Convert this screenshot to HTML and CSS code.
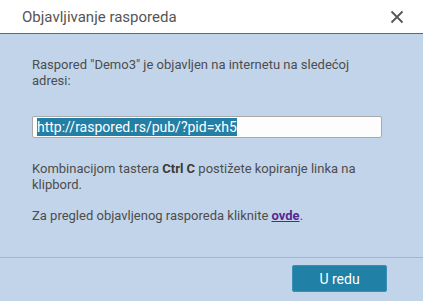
FILE: index.html
```html
<!DOCTYPE html>
<html>
<head>
<meta charset="utf-8">
<link rel="stylesheet" href="styles.css">
</head>
<body>
<div class="dialog">
  <div class="header">
    <span class="title">Objavljivanje rasporeda</span>
    <svg class="close" width="14" height="14" viewBox="0 0 14 14"><path d="M1.5 1.5 L12.5 12.5 M12.5 1.5 L1.5 12.5" stroke="#555" stroke-width="1.8" fill="none"/></svg>
  </div>
  <div class="content">
    <p class="p1">Raspored "Demo3" je objavljen na internetu na sledećoj adresi:</p>
    <div class="field"><span class="sel">http://raspored.rs/pub/?pid=xh5</span></div>
    <p class="p2">Kombinacijom tastera <b>Ctrl C</b> postižete kopiranje linka na klipbord.</p>
    <p class="p3">Za pregled objavljenog rasporeda kliknite <a href="#" class="link">ovde</a>.</p>
  </div>
  <div class="footer">
    <button class="ok">U redu</button>
  </div>
</div>
</body>
</html>
```

FILE: styles.css
```css
html, body {
  margin: 0;
  padding: 0;
}
body {
  font-family: Roboto, "Liberation Sans", sans-serif;
  background: #c2d4ea;
}
.dialog {
  width: 423px;
  height: 301px;
  display: flex;
  flex-direction: column;
  background: #c2d4ea;
}
.header {
  height: 33px;
  background: #ffffff;
  border-bottom: 1px solid #2b7a9b;
  display: flex;
  align-items: center;
  justify-content: space-between;
  padding: 0 19px 0 22px;
  flex: none;
}
.title {
  font-size: 15px;
  color: #555555;
}
.close {
  display: block;
  margin-top: 1px;
}
.content {
  flex: 1;
  padding: 23px 41px 0 32px;
  color: #4d4d4d;
  font-size: 13px;
  line-height: 16px;
}
.content p {
  margin: 0;
}
.p1 {
  margin-bottom: 27px !important;
}
.field {
  height: 20px;
  border: 1px solid #a9a9a9;
  border-radius: 2px;
  background: #fdfdfd;
  padding: 0 4px;
  font-size: 14px;
  line-height: 20px;
  color: #fff;
  white-space: nowrap;
  overflow: hidden;
}
.sel {
  background: #237fa5;
  color: #ffffff;
  display: inline-block;
  line-height: 18px;
  margin-top: 1px;
  vertical-align: top;
}
.p2 {
  margin-top: 23px !important;
}
.p3 {
  margin-top: 15px !important;
}
.p2 b {
  font-weight: bold;
  color: #3a3a3a;
}
.link {
  color: #5a2690;
  font-weight: bold;
  text-decoration: underline;
}
.footer {
  flex: none;
  border-top: 1px solid #9db6d8;
  padding: 7px 36px 9px 0;
  display: flex;
  justify-content: flex-end;
}
.ok {
  width: 95px;
  height: 27px;
  background: #2080a5;
  border: 1px solid #3b8fb3;
  border-radius: 2px;
  color: #ffffff;
  font-family: Roboto, "Liberation Sans", sans-serif;
  font-size: 14px;
  padding: 0;
}
```
